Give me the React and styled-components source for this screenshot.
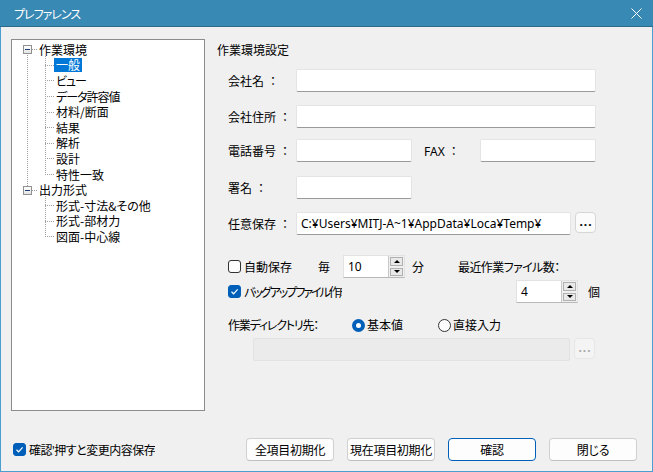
import React from 'react';
import styled, { createGlobalStyle, css } from 'styled-components';

const GlobalStyle = createGlobalStyle`
  html, body { margin: 0; padding: 0; background: #f0f0f0; }
  body {
    font-family: "Noto Sans", "Noto Sans CJK JP", sans-serif;
    font-size: 12px;
    color: #000;
  }
  * { box-sizing: border-box; }
`;

const ROW_H = 15.6;
const BLUE = '#005fb8';
const hasKana = (s) => /[\u30A0-\u30FF]/.test(s);

/* narrow kana run, like Meiryo UI */
const Tight = styled.span`
  font-feature-settings: "palt";
  letter-spacing: ${(p) => (p.$ls !== undefined ? p.$ls : -1)}px;
`;

const Window = styled.div`
  width: 653px;
  height: 472px;
  display: flex;
  flex-direction: column;
  background: #f0f0f0;
  overflow: hidden;
`;

const TitleBar = styled.div`
  flex: none;
  height: 27px;
  padding: 0 11px 0 14px;
  background: #3889b3;
  border-bottom: 1px solid #2c6a8c;
  display: flex;
  align-items: center;
  justify-content: space-between;
  color: #fff;
  font-size: 12px;
  font-family: "Noto Sans CJK JP", sans-serif;
`;

const Body = styled.div`
  flex: 1;
  display: grid;
  grid-template-columns: 194px 1fr;
  grid-template-rows: 372px auto;
  column-gap: 12px;
  padding: 12px 15px 0 10px;
  border: 1px solid #4a9fd0;
  border-top: none;
`;

/* ---------- tree ---------- */
const Tree = styled.div`
  background: #fff;
  border: 1px solid #8c8c8c;
  padding-top: 2px;
  font-family: "Noto Sans CJK JP", sans-serif;
`;

const Group = styled.div`
  position: relative;
  ${(p) =>
    p.$hasNext &&
    css`
      &::after {
        content: '';
        position: absolute;
        left: 15px;
        top: ${ROW_H / 2 + 5}px;
        bottom: -${ROW_H / 2 - 4}px;
        border-left: 1px dotted #a0a0a0;
      }
    `}
`;

const TreeRow = styled.div`
  height: ${ROW_H}px;
  display: flex;
  align-items: center;
  padding-left: ${(p) => (p.$level === 0 ? 11 : 33)}px;
  white-space: nowrap;
`;

const ExpandBox = styled.span`
  flex: none;
  width: 9px;
  height: 9px;
  border: 1px solid #919191;
  background: linear-gradient(#ffffff, #e4e4e4);
  display: flex;
  align-items: center;
  justify-content: center;
  &::before {
    content: '';
    width: 5px;
    height: 1px;
    background: #1e3f73;
  }
`;

const Connector = styled.span`
  flex: none;
  width: ${(p) => p.$w}px;
  height: 0;
  border-top: 1px dotted #a0a0a0;
`;

const ChildList = styled.div`
  position: relative;
  &::before {
    content: '';
    position: absolute;
    left: 33px;
    top: -2px;
    bottom: ${ROW_H / 2}px;
    border-left: 1px dotted #a0a0a0;
  }
`;

const NodeLabel = styled.span`
  padding: 0 2px;
  line-height: 14px;
  font-feature-settings: "palt";
  ${(p) =>
    p.$selected &&
    css`
      background: #0078d7;
      color: #fff;
    `}
`;

/* ---------- form ---------- */
const Panel = styled.div`
  display: flex;
  flex-direction: column;
`;

const Heading = styled.div`
  margin-top: 4px;
  height: 16px;
  line-height: 16px;
`;

const Row = styled.div`
  display: flex;
  align-items: center;
  margin-top: ${(p) => p.$mt}px;
  padding-left: ${(p) => (p.$indent !== undefined ? p.$indent : 11)}px;
  height: ${(p) => p.$h || 23}px;
  white-space: nowrap;
`;

const Label = styled.span`
  flex: none;
  width: ${(p) => p.$w}px;
  margin-left: ${(p) => p.$ml || 0}px;
  white-space: nowrap;
`;

const Field = styled.input`
  flex: none;
  width: ${(p) => p.$w}px;
  height: 23px;
  margin: 0;
  padding: 0 4px;
  font: inherit;
  color: #000;
  background: #fff;
  border: 1px solid #e4e4e4;
  border-bottom: 1px solid #9a9a9a;
  border-radius: 2px;
  outline: none;
  &:disabled {
    background: #ebebeb;
    border: 1px solid #e2e2e2;
  }
`;

const Dots = styled.button`
  flex: none;
  width: 21px;
  height: 21px;
  margin: 0 0 2px 4px;
  padding: 0 0 4px 1px;
  border: 1px solid #d6d6d6;
  border-radius: 4px;
  background: #fbfbfb;
  font: bold 12px "Noto Sans", sans-serif;
  letter-spacing: 1px;
  line-height: 1;
  color: #000;
  display: flex;
  align-items: flex-end;
  justify-content: center;
  &:disabled {
    color: #a8a8a8;
    background: #f4f4f4;
    border-color: #e6e6e6;
  }
`;

const CheckWrap = styled.span`
  display: flex;
  align-items: center;
  gap: 3px;
  flex: none;
  width: ${(p) => (p.$w ? `${p.$w}px` : 'auto')};
  overflow: hidden;
  white-space: nowrap;
`;

const Box = styled.span`
  flex: none;
  width: 13px;
  height: 13px;
  border-radius: 3px;
  display: flex;
  align-items: center;
  justify-content: center;
  ${(p) =>
    p.$checked
      ? css`
          background: ${BLUE};
          border: 1px solid ${BLUE};
        `
      : css`
          background: #fdfdfd;
          border: 1px solid #333;
        `}
`;

const Check = ({ checked, label, width, ls }) => (
  <CheckWrap $w={width}>
    <Box $checked={checked}>
      {checked && (
        <svg width="9" height="9" viewBox="0 0 9 9">
          <polyline points="1.5,4.8 3.6,6.8 7.6,2.4" fill="none" stroke="#fff" strokeWidth="1.2" />
        </svg>
      )}
    </Box>
    <Tight $ls={ls}>{label}</Tight>
  </CheckWrap>
);

const Spin = styled.div`
  flex: none;
  display: flex;
  width: 62px;
  height: 23px;
  margin-left: ${(p) => p.$ml || 0}px;
  background: #fff;
  border: 1px solid #e2e2e2;
  border-bottom-color: #b8b8b8;
`;

const SpinText = styled.div`
  flex: 1;
  padding-left: 4px;
  display: flex;
  align-items: center;
`;

const SpinButtons = styled.div`
  width: 16px;
  display: flex;
  flex-direction: column;
  background: #f0f0f0;
  border-left: 1px solid #c8c8c8;
`;

const SpinBtn = styled.div`
  flex: 1;
  margin: 1px;
  border: 1px solid #b0b0b0;
  background: #e9e9e9;
  display: flex;
  align-items: center;
  justify-content: center;
  &::before {
    content: '';
    width: 0;
    height: 0;
    border-left: 3px solid transparent;
    border-right: 3px solid transparent;
    ${(p) =>
      p.$down
        ? css`border-top: 3px solid #000;`
        : css`border-bottom: 3px solid #000;`}
  }
`;

const SpinBox = ({ value, ml }) => (
  <Spin $ml={ml}>
    <SpinText>{value}</SpinText>
    <SpinButtons>
      <SpinBtn />
      <SpinBtn $down />
    </SpinButtons>
  </Spin>
);

const Unit = styled.span`
  flex: none;
  margin-left: ${(p) => p.$ml || 0}px;
`;

const RadioWrap = styled.span`
  flex: none;
  width: ${(p) => (p.$w ? `${p.$w}px` : 'auto')};
  display: flex;
  align-items: center;
  gap: 2px;
`;

const RadioDot = styled.span`
  flex: none;
  width: 13px;
  height: 13px;
  border-radius: 50%;
  display: flex;
  align-items: center;
  justify-content: center;
  ${(p) =>
    p.$on
      ? css`
          background: ${BLUE};
          &::after {
            content: '';
            width: 5px;
            height: 5px;
            border-radius: 50%;
            background: #fff;
          }
        `
      : css`
          border: 1px solid #333;
          background: #fdfdfd;
        `}
`;

const Radio = ({ on, label, width }) => (
  <RadioWrap $w={width}>
    <RadioDot $on={on} />
    <span>{label}</span>
  </RadioWrap>
);

/* ---------- footer ---------- */
const Footer = styled.div`
  grid-column: 1 / -1;
  display: flex;
  align-items: center;
  justify-content: space-between;
  padding: 17px 0 0 2px;
`;

const ButtonBar = styled.div`
  display: flex;
  gap: 13px;
`;

const Button = styled.button`
  width: 88px;
  height: 23px;
  margin: 0;
  padding: 0;
  font: 12px "Noto Sans CJK JP", sans-serif;
  font-feature-settings: "palt";
  letter-spacing: -0.3px;
  color: #000;
  background: #fdfdfd;
  border: 1px solid #d0d0d0;
  border-bottom-color: #c0c0c0;
  border-radius: 4px;
  ${(p) =>
    p.$primary &&
    css`
      border-color: ${BLUE};
    `}
`;

const treeData = [
  {
    label: '作業環境',
    children: ['一般', 'ビュー', 'データ許容値', '材料/断面', '結果', '解析', '設計', '特性一致'],
  },
  {
    label: '出力形式',
    children: ['形式-寸法&その他', '形式-部材力', '図面-中心線'],
  },
];

export default function App() {
  return (
    <>
      <GlobalStyle />
      <Window>
        <TitleBar>
          <Tight>プレファレンス</Tight>
          <svg width="11" height="11" viewBox="0 0 11 11">
            <path d="M0.5 0.5 L10.5 10.5 M10.5 0.5 L0.5 10.5" stroke="#fff" strokeWidth="1" />
          </svg>
        </TitleBar>
        <Body>
          <Tree>
            {treeData.map((g, gi) => (
              <Group key={g.label} $hasNext={gi < treeData.length - 1}>
                <TreeRow $level={0}>
                  <ExpandBox />
                  <Connector $w={5} />
                  <NodeLabel>{g.label}</NodeLabel>
                </TreeRow>
                <ChildList>
                  {g.children.map((c) => (
                    <TreeRow key={c} $level={1}>
                      <Connector $w={9} />
                      <NodeLabel $selected={c === '一般'}>
                        {hasKana(c) ? <Tight>{c}</Tight> : c}
                      </NodeLabel>
                    </TreeRow>
                  ))}
                </ChildList>
              </Group>
            ))}
          </Tree>

          <Panel>
            <Heading>作業環境設定</Heading>
            <Row $mt={10}>
              <Label $w={68}>会社名 ：</Label>
              <Field $w={300} readOnly defaultValue="" />
            </Row>
            <Row $mt={13}>
              <Label $w={68}>会社住所 ：</Label>
              <Field $w={300} readOnly defaultValue="" />
            </Row>
            <Row $mt={11}>
              <Label $w={68}>電話番号 ：</Label>
              <Field $w={116} readOnly defaultValue="" />
              <Label $w={56} $ml={12}>FAX ：</Label>
              <Field $w={116} readOnly defaultValue="" />
            </Row>
            <Row $mt={14}>
              <Label $w={68}>署名 ：</Label>
              <Field $w={116} readOnly defaultValue="" />
            </Row>
            <Row $mt={13}>
              <Label $w={68}>任意保存 ：</Label>
              <Field $w={275} readOnly defaultValue="C:¥Users¥MITJ-A~1¥AppData¥Loca¥Temp¥" />
              <Dots>...</Dots>
            </Row>
            <Row $mt={20}>
              <Check label="自動保存" width={90} ls={0} />
              <Label $w={25}>毎</Label>
              <SpinBox value="10" />
              <Unit $ml={7}>分</Unit>
              <Unit $ml={34}>
                <Tight $ls={-0.6}>最近作業ファイル数：</Tight>
              </Unit>
            </Row>
            <Row $mt={2}>
              <Check checked label="バッグアップファイル作成" width={114} ls={-2} />
              <SpinBox value="4" ml={174} />
              <Unit $ml={10}>個</Unit>
            </Row>
            <Row $mt={14} $h={16}>
              <Label $w={124}>
                <Tight $ls={-1.2}>作業ディレクトリ先：</Tight>
              </Label>
              <Radio on label="基本値" width={86} />
              <Radio label="直接入力" />
            </Row>
            <Row $mt={5} $indent={36}>
              <Field $w={317} disabled defaultValue="" />
              <Dots disabled>...</Dots>
            </Row>
          </Panel>

          <Footer>
            <Check checked label="確認'押すと変更内容保存" ls={-0.5} />
            <ButtonBar>
              <Button>全項目初期化</Button>
              <Button>現在項目初期化</Button>
              <Button $primary>確認</Button>
              <Button>閉じる</Button>
            </ButtonBar>
          </Footer>
        </Body>
      </Window>
    </>
  );
}
